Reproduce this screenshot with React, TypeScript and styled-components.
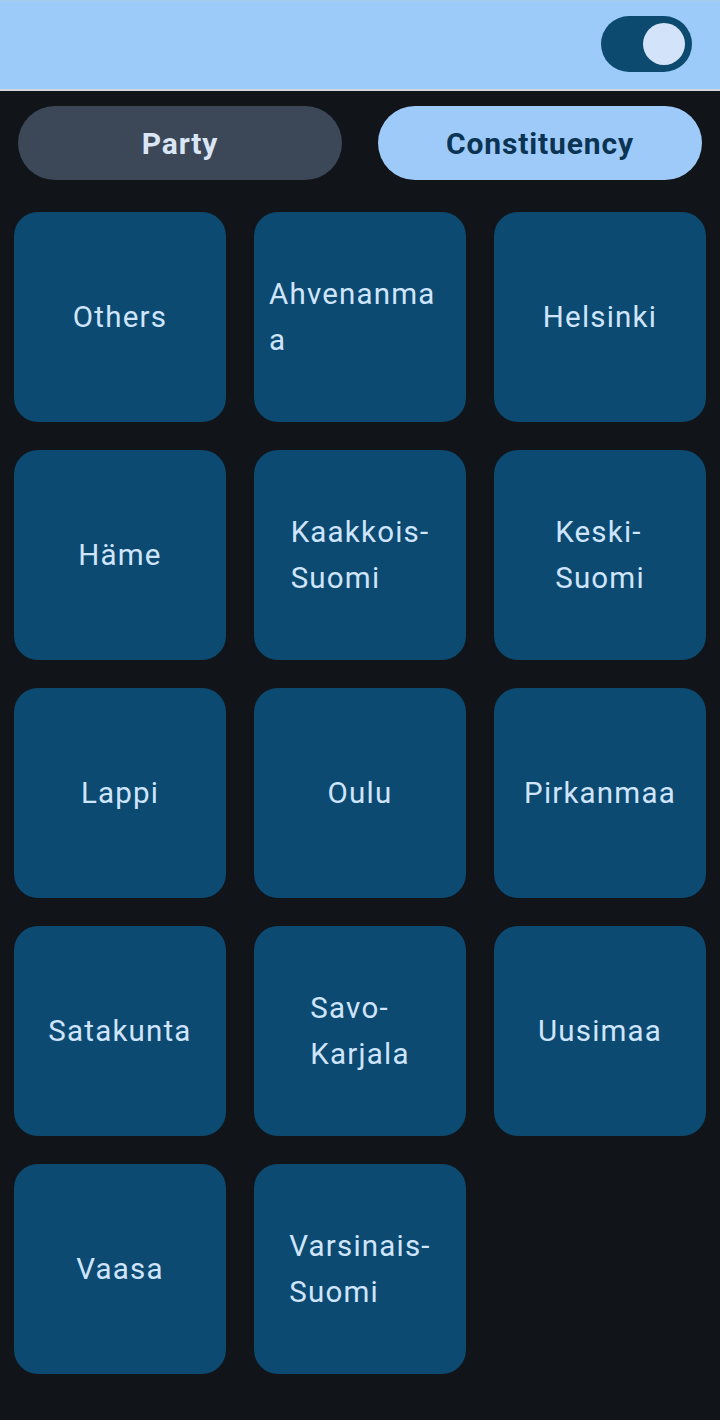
import React from "react";
import styled, { createGlobalStyle } from "styled-components";

const GlobalStyle = createGlobalStyle`
  html, body {
    margin: 0;
    padding: 0;
    background: #111418;
  }
  body {
    font-family: Roboto, "Noto Sans", sans-serif;
    -webkit-font-smoothing: antialiased;
  }
`;

const Page = styled.div`
  min-height: 1420px;
  background: #111418;
  display: flex;
  flex-direction: column;
`;

const TopBar = styled.header`
  background: #9ccbfa;
  border-top: 1px solid #a6cbef;
  border-bottom: 2px solid #cfd6de;
  box-sizing: border-box;
  height: 91px;
  display: flex;
  align-items: center;
  justify-content: flex-end;
  padding: 0 28px 2px 0;
`;

const Switch = styled.div`
  width: 91px;
  height: 56px;
  border-radius: 28px;
  background: #0d4a70;
  display: flex;
  align-items: center;
  justify-content: flex-end;
  padding-right: 7px;
  box-sizing: border-box;
`;

const Knob = styled.div`
  width: 42px;
  height: 42px;
  border-radius: 50%;
  background: #d3e4fa;
`;

const SegmentRow = styled.div`
  display: grid;
  grid-template-columns: 1fr 1fr;
  gap: 36px;
  padding: 15px 18px 0;
`;

const SegmentButton = styled.button<{ $active?: boolean }>`
  height: 74px;
  border: none;
  border-radius: 37px;
  background: ${(p) => (p.$active ? "#9ecafa" : "#3c4858")};
  color: ${(p) => (p.$active ? "#0a3452" : "#dae5f6")};
  font-family: Roboto, "Noto Sans", sans-serif;
  font-weight: 700;
  font-size: 30px;
  letter-spacing: 0.85px;
  display: flex;
  align-items: center;
  justify-content: center;
  padding: 0;
`;

const Grid = styled.div`
  display: grid;
  grid-template-columns: repeat(3, 212px);
  grid-auto-rows: 210px;
  gap: 28px;
  padding: 32px 14px 0;
`;

const Card = styled.div`
  background: #0c4a71;
  border-radius: 24px;
  display: flex;
  align-items: center;
  justify-content: center;
  padding: 0 15px;
  box-sizing: border-box;
`;

const CardLabel = styled.span`
  display: block;
  width: min-content;
  max-width: 100%;
  color: #cfe5fd;
  font-size: 29.5px;
  line-height: 46px;
  letter-spacing: 1.2px;
  text-align: left;
  overflow-wrap: break-word;
`;

const names = [
  "Others",
  "Ahvenanmaa",
  "Helsinki",
  "Häme",
  "Kaakkois-Suomi",
  "Keski-Suomi",
  "Lappi",
  "Oulu",
  "Pirkanmaa",
  "Satakunta",
  "Savo-Karjala",
  "Uusimaa",
  "Vaasa",
  "Varsinais-Suomi",
];

export default function App() {
  return (
    <>
      <GlobalStyle />
      <Page>
        <TopBar>
          <Switch>
            <Knob />
          </Switch>
        </TopBar>
        <SegmentRow>
          <SegmentButton>Party</SegmentButton>
          <SegmentButton $active>Constituency</SegmentButton>
        </SegmentRow>
        <Grid>
          {names.map((n) => (
            <Card key={n}>
              <CardLabel>{n}</CardLabel>
            </Card>
          ))}
        </Grid>
      </Page>
    </>
  );
}
